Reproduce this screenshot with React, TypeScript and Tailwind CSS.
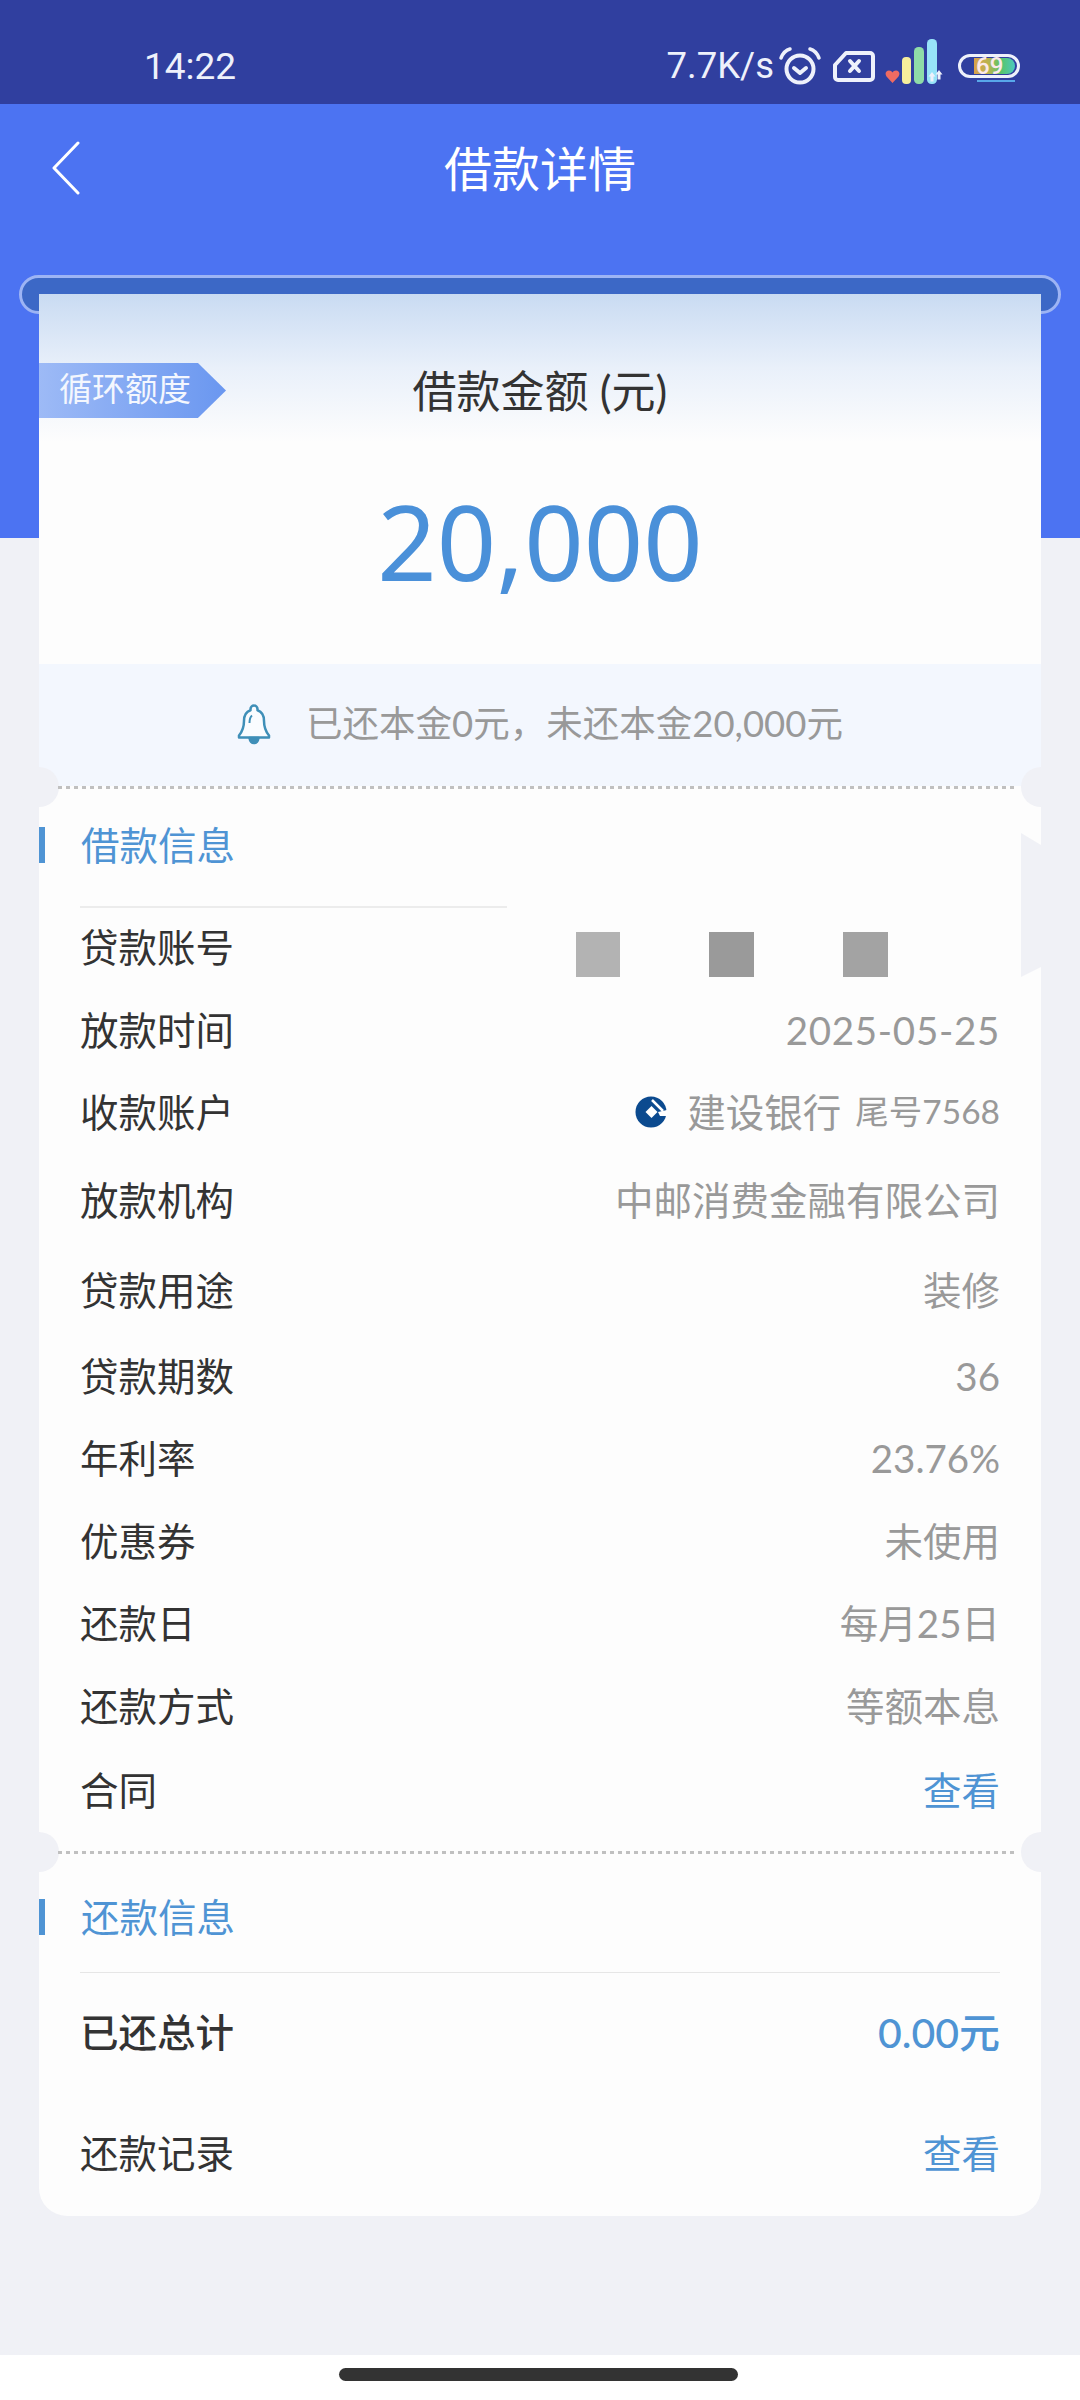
const rows = [
  { label: "放款时间", value: "2025-05-25", h: "h-[88px]", cls: "tracking-[0.7px]" },
  { label: "收款账户", value: "bank", h: "h-[76px]", cls: "" },
  { label: "放款机构", value: "中邮消费金融有限公司", h: "h-[100px]", cls: "" },
  { label: "贷款用途", value: "装修", h: "h-[80px]", cls: "" },
  { label: "贷款期数", value: "36", h: "h-[92px]", cls: "" },
  { label: "年利率", value: "23.76%", h: "h-[72px]", cls: "" },
  { label: "优惠券", value: "未使用", h: "h-[94px]", cls: "" },
  { label: "还款日", value: "每月25日", h: "h-[70px]", cls: "" },
  { label: "还款方式", value: "等额本息", h: "h-[96px]", cls: "" },
];

function AlarmIcon() {
  return (
    <svg width="44" height="40" viewBox="0 0 44 40" fill="none" stroke="#eef1fb" strokeLinecap="round" strokeLinejoin="round">
      <circle cx="22" cy="23" r="13.5" strokeWidth="4" />
      <path d="M16 22l6 5 6-5" strokeWidth="4" />
      <path d="M3 12C5 7 8 4 12 3" strokeWidth="3.5" />
      <path d="M41 12C39 7 36 4 32 3" strokeWidth="3.5" />
    </svg>
  );
}

function SimIcon() {
  return (
    <svg width="42" height="33" viewBox="0 0 42 33" fill="none" stroke="#eef1fb" strokeLinecap="round" strokeLinejoin="round">
      <path d="M2 15L13 3h24a3 3 0 0 1 3 3v21a3 3 0 0 1-3 3H5a3 3 0 0 1-3-3z" strokeWidth="4" />
      <path d="M17 11l9 10M26 11l-9 10" strokeWidth="4" />
    </svg>
  );
}

function SignalIcon() {
  return (
    <svg width="64" height="46" viewBox="0 0 64 46" fill="none">
      <path d="M7.5 44L1.500 37.500C-.5 34.500 1 31.500 4 31.500c1.500 0 2.800.8 3.500 2 .7-1.200 2-2 3.500-2 3 0 4.500 3 2.500 6z" fill="#ef6b62" />
      <rect x="17" y="18" width="9" height="27" rx="4" fill="#f6ee9c" />
      <rect x="29" y="8" width="10" height="37" rx="4.500" fill="#8fdca8" />
      <rect x="42" y="0" width="10" height="45" rx="4.500" fill="#97e3f8" />
      <path d="M47 33l3.500 4.500h-2v5h-3v-5h-2zM54 31l3.500 4.500h-2v5h-3v-5h-2z" fill="#eef1fb" />
    </svg>
  );
}

function Battery() {
  return (
    <div className="relative h-[24px] w-[62px] rounded-full border-[3px] border-[#eef1fb]">
      <div className="absolute top-[1px] right-[2px] bottom-[1px] left-[13px] rounded-r-full bg-[linear-gradient(to_right,#d9a04c,#b9b34f_35%,#58c567_65%,#4cc9c0)]" />
      <span className="absolute top-[-5px] left-[15px] font-['Roboto'] text-[24px] leading-[28px] font-medium text-[#fbe9ea]">69</span>
      <div className="absolute right-[2px] bottom-[-7px] left-[16px] h-[2px] bg-[#58a8ea]" />
    </div>
  );
}

function BackIcon() {
  return (
    <svg width="30" height="54" viewBox="0 0 30 54" fill="none" stroke="#fff" strokeWidth="3" strokeLinecap="round" strokeLinejoin="round">
      <path d="M27 2L3 27l24 25" />
    </svg>
  );
}

function BellIcon() {
  return (
    <svg width="34" height="42" viewBox="0 0 34 42" fill="#fafcff" stroke="#3f8fb8" strokeWidth="2.500" strokeLinejoin="round">
      <path d="M17 2.500a3.500 3.500 0 0 1 3.500 3.500v1.300C25.500 9 27 13 27 18c0 7 2.500 11.500 5 14.500v2H2v-2C4.500 29.500 7 25 7 18c0-5 1.500-9 6.500-10.700V6A3.500 3.500 0 0 1 17 2.500z" />
      <path d="M12.500 35c.5 3 2.200 5 4.500 5s4-2 4.500-5z" fill="#3f8fb8" />
      <path d="M12.500 20c0-3.500.7-6 2.500-7.500" fill="none" strokeWidth="2" />
    </svg>
  );
}

function CcbLogo() {
  return (
    <svg width="32" height="32" viewBox="0 0 32 32">
      <circle cx="16" cy="16" r="15.500" fill="#0b4a8f" />
      <path d="M16.500 10l6 6-6 6-6-6z" fill="#fff" />
      <path d="M17 4l11 11" stroke="#fff" strokeWidth="2.500" fill="none" />
      <path d="M23 16l9-2v6h-7z" fill="#fff" />
    </svg>
  );
}

function DottedLine() {
  return (
    <div className="relative h-[3px] w-full">
      <div className="absolute top-[-19px] left-[-20px] h-[40px] w-[40px] rounded-full bg-[#f0f1f6]" />
      <div className="absolute top-[-19px] right-[-20px] h-[40px] w-[40px] rounded-full bg-[#f0f1f6]" />
      <div className="absolute top-0 right-[23px] left-[19px] h-[3px] bg-[linear-gradient(to_right,#c0c0c0_50%,transparent_50%)] bg-[length:8px_3px]" />
    </div>
  );
}

function SectionTitle({ text }: { text: string }) {
  return (
    <div className="flex h-[36px] items-center">
      <div className="h-full w-[6px] bg-[#4f94d4]" />
      <span className="ml-[36px] text-[38.5px] leading-[36px] text-[#4f94d4]">{text}</span>
    </div>
  );
}

export default function App() {
  return (
    <div className="relative flex h-[2400px] w-[1080px] flex-col overflow-hidden bg-[#f0f1f6] font-['Lato','Noto_Sans_CJK_SC',sans-serif]">
      <div className="flex h-[104px] items-center bg-[#303f9f] pt-[28px]">
        <span className="ml-[144px] font-['Roboto'] text-[37px] leading-none text-[#eef1fb]">14:22</span>
        <span className="ml-auto font-['Roboto'] text-[36.5px] leading-none text-[#eef1fb]">7.7K/s</span>
        <div className="ml-[4px]"><AlarmIcon /></div>
        <div className="ml-[11px]"><SimIcon /></div>
        <div className="mb-[8px] ml-[10px]"><SignalIcon /></div>
        <div className="mr-[60px] ml-[9px]"><Battery /></div>
      </div>

      <div className="h-[434px] bg-[#4c73f2]">
        <div className="relative flex h-[128px] items-center justify-center pt-[2px]">
          <div className="absolute top-[37px] left-[51px]"><BackIcon /></div>
          <h1 className="text-[48px] leading-none font-normal text-white">借款详情</h1>
        </div>
        <div className="mx-[19px] mt-[43px] h-[39px] rounded-full border-[3px] border-[#9db4f4] bg-[#3c68c6]" />
      </div>

      <div className="relative mx-[39px] mt-[-244px] h-[1922px] rounded-b-[28px] bg-[#fdfdfd]">
        <div className="relative h-[370px] bg-[linear-gradient(to_bottom,#c9dbf2,#e9f0fa_20%,#fdfdfd_40%)]">
          <div className="absolute top-[69px] left-0 flex h-[55px] w-[187px] items-center bg-[linear-gradient(to_right,#9dbaf6,#6a97f0)] pb-[4px] pl-[20px] text-[33px] leading-none text-[#f4f7fe] [clip-path:polygon(0_0,85%_0,100%_50%,85%_100%,0_100%)]">
            循环额度
          </div>
          <div className="flex flex-col items-center">
            <div className="mt-[71px] text-[44px] leading-[52px] text-[#333]">借款金额 (元)</div>
            <div className="mt-[71px] font-['Noto_Sans'] text-[104px] leading-[106px] text-[#4a90d9]">20,000</div>
          </div>
        </div>

        <div className="flex h-[122px] items-start justify-center gap-[35px] bg-[#f3f7fe] pt-[39px]">
          <BellIcon />
          <span className="text-[36.5px] leading-[40px] text-[#999]">已还本金0元，未还本金20,000元</span>
        </div>
        <DottedLine />

        <div className="mt-[38px]"><SectionTitle text="借款信息" /></div>
        <div className="mt-[43px] ml-[41px] h-[2px] w-[427px] bg-[#ececec]" />

        <div className="absolute top-[539px] right-0 h-[144px] w-[20px] bg-[#f0f1f6] [clip-path:polygon(0_0,100%_12px,100%_134px,0_100%)]" />

        <div className="px-[41px]">
          <div className="flex h-[78px] items-center justify-between">
            <span className="text-[38.5px] leading-none text-[#333]">贷款账号</span>
            <div className="mt-[15px] mr-[112px] flex gap-[89px]">
              <div className="h-[45px] w-[44px] bg-[#b3b3b3]" />
              <div className="h-[45px] w-[45px] bg-[#9a9a9a]" />
              <div className="h-[45px] w-[45px] bg-[#a3a3a3]" />
            </div>
          </div>
          {rows.map((r) => (
            <div key={r.label} className={`flex items-center justify-between ${r.h}`}>
              <span className="text-[38.5px] leading-none text-[#333]">{r.label}</span>
              {r.value === "bank" ? (
                <div className="flex items-center text-[#999]">
                  <CcbLogo />
                  <span className="ml-[20px] text-[38.5px] leading-none">建设银行</span>
                  <span className="ml-[14px] text-[33.5px] leading-none">尾号7568</span>
                </div>
              ) : (
                <span className={`text-[38.5px] leading-none text-[#999] ${r.cls}`}>{r.value}</span>
              )}
            </div>
          ))}
          <div className="flex h-[72px] items-center justify-between">
            <span className="text-[38.5px] leading-none text-[#333]">合同</span>
            <span className="text-[38.5px] leading-none text-[#4f94d4]">查看</span>
          </div>
        </div>

        <div className="mt-[25px]"><DottedLine /></div>
        <div className="mt-[45px]"><SectionTitle text="还款信息" /></div>
        <div className="mx-[41px] mt-[37px] h-[1px] bg-[#e6e6e6]" />

        <div className="px-[41px]">
          <div className="flex h-[118px] items-center justify-between">
            <span className="text-[38.5px] leading-none font-medium text-[#333]">已还总计</span>
            <span className="text-[41px] leading-none font-medium text-[#4f94d4]">0.00元</span>
          </div>
          <div className="flex h-[124px] items-center justify-between">
            <span className="text-[38.5px] leading-none text-[#333]">还款记录</span>
            <span className="text-[38.5px] leading-none text-[#4f94d4]">查看</span>
          </div>
        </div>
      </div>

      <div className="mt-auto flex h-[45px] justify-center bg-white pt-[13px]">
        <div className="ml-[-3px] h-[13px] w-[399px] rounded-full bg-[#333]" />
      </div>
    </div>
  );
}
